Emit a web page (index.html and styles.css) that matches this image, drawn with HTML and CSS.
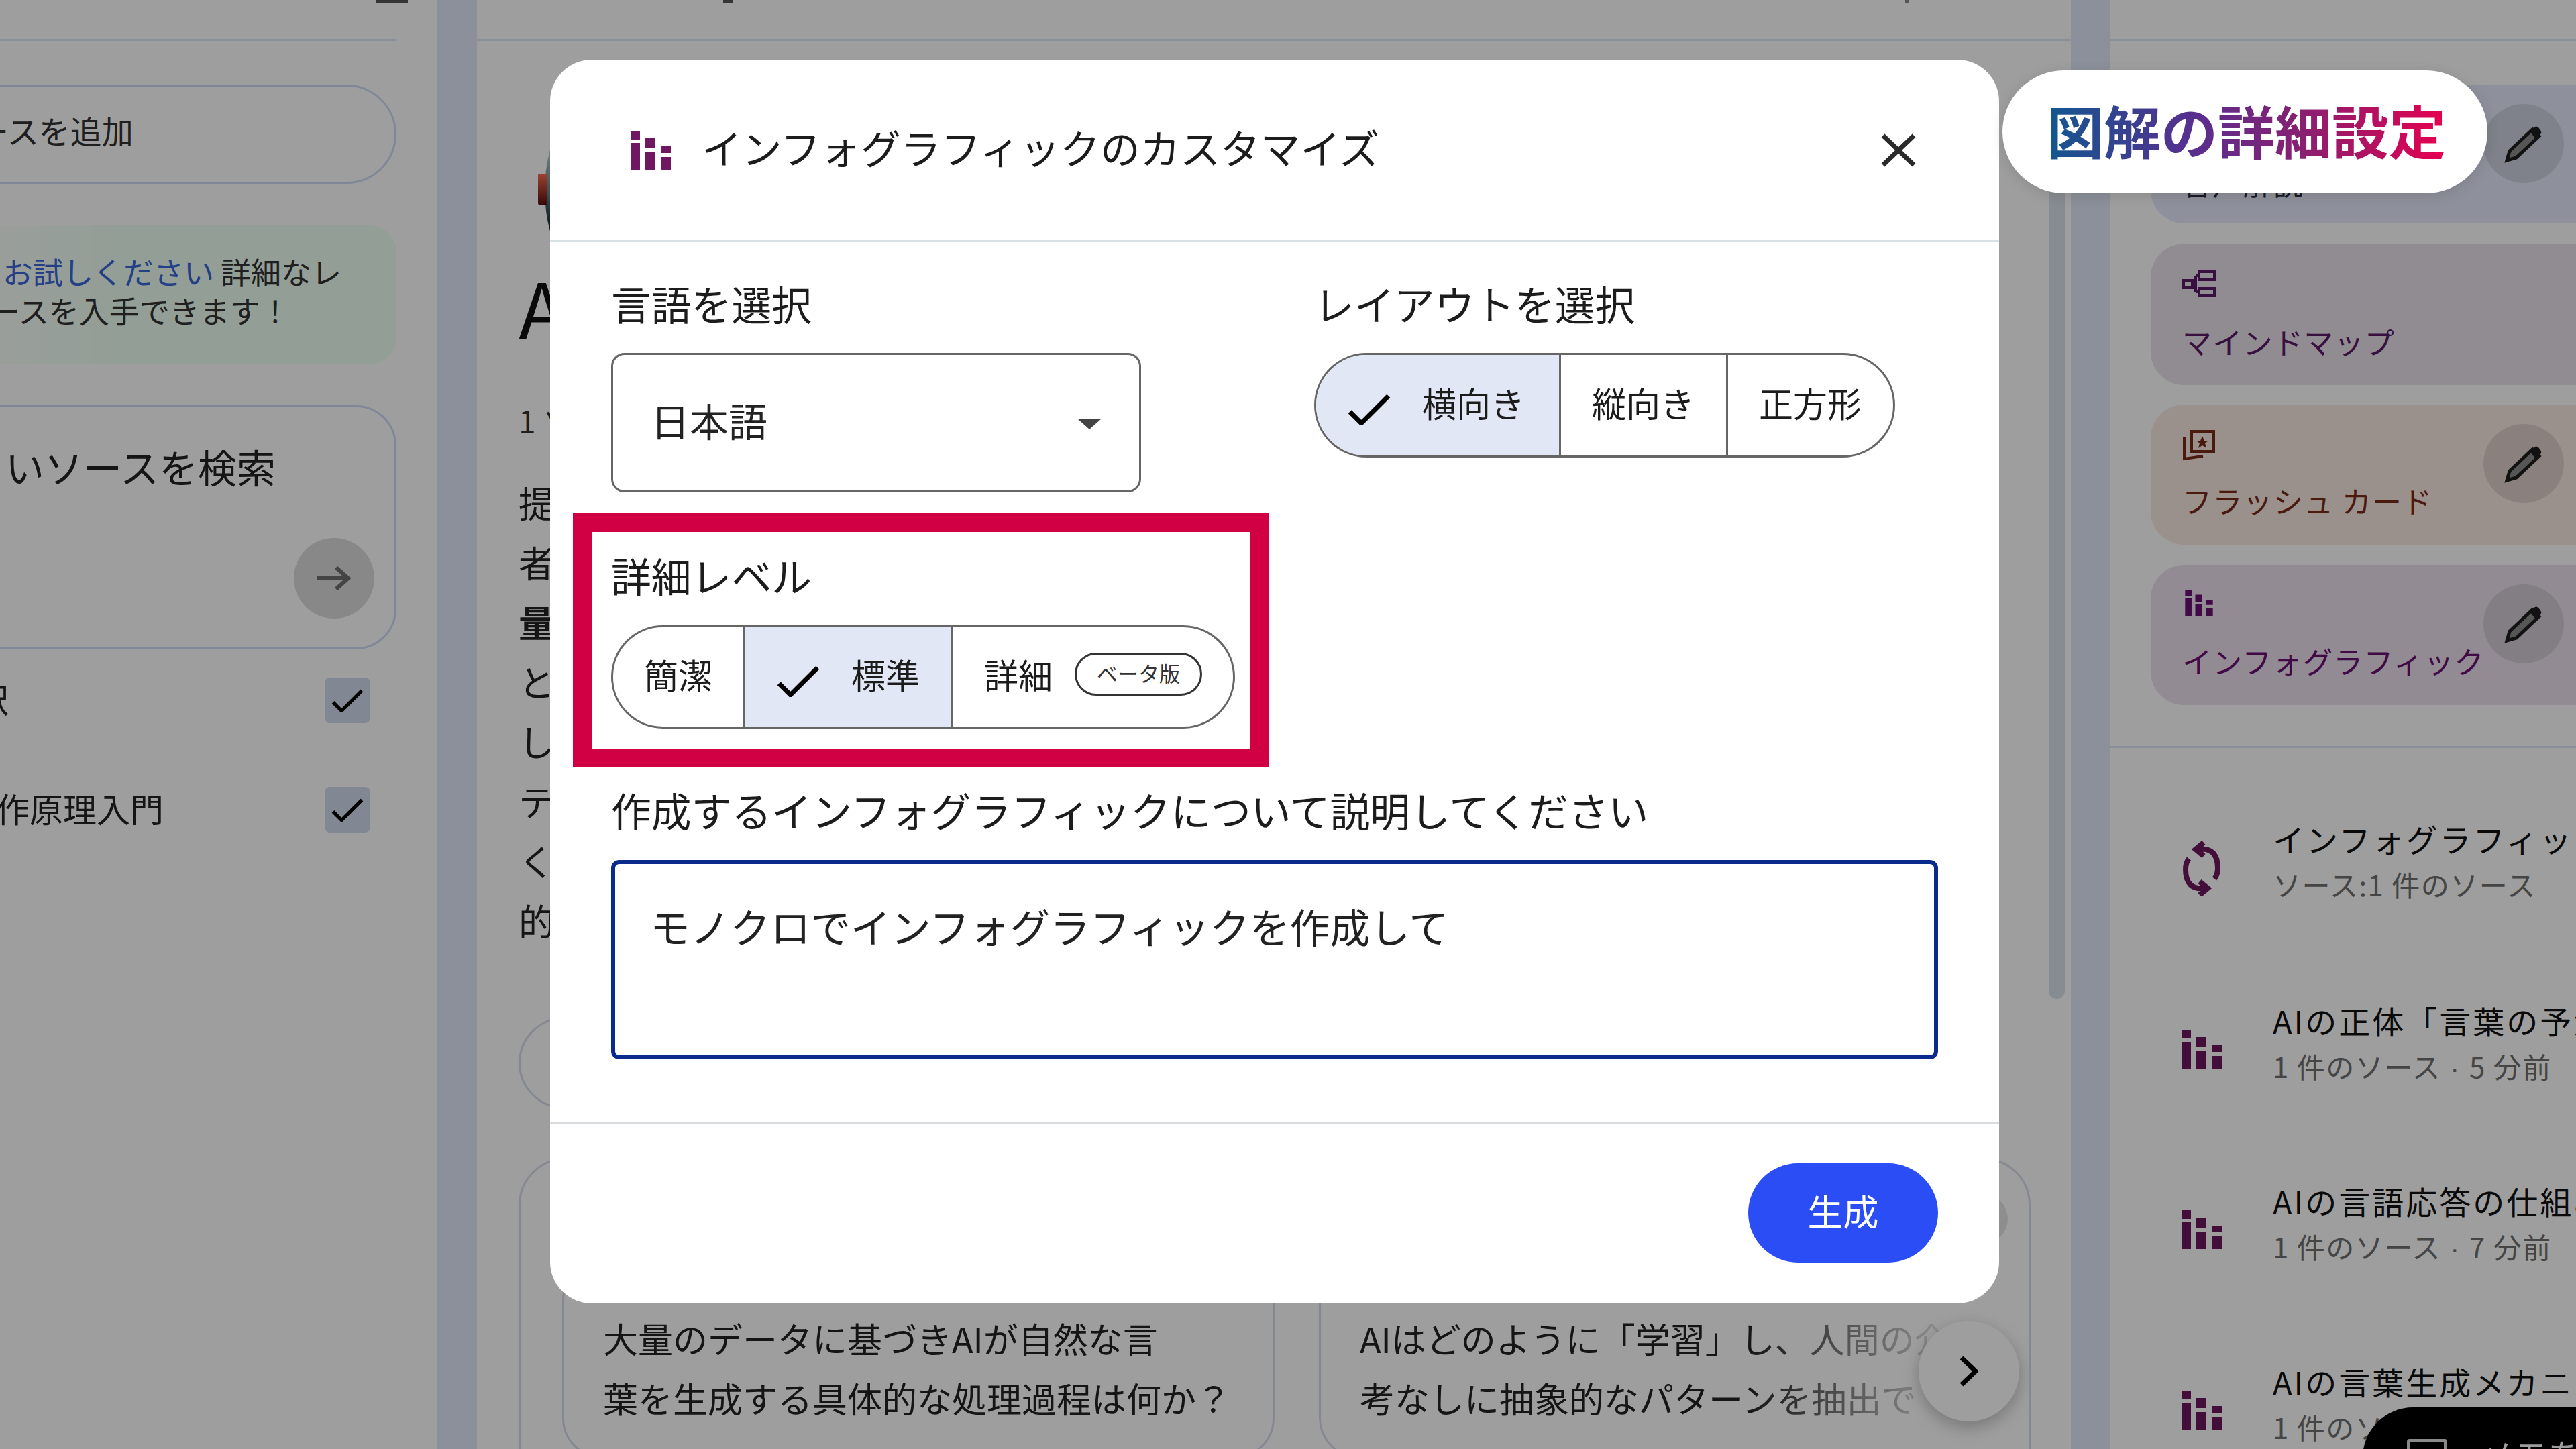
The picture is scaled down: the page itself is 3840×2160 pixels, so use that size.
FILE: index.html
```html
<!DOCTYPE html>
<html lang="ja">
<head>
<meta charset="utf-8">
<title>インフォグラフィックのカスタマイズ</title>
<link rel="stylesheet" href="styles.css">
</head>
<body>
<svg class="defs" width="0" height="0" aria-hidden="true">
  <defs>
    <linearGradient id="g-logo" x1="0" y1="0" x2="0" y2="1">
      <stop offset="0" stop-color="#b4cfc8"/>
      <stop offset=".55" stop-color="#5d7f80"/>
      <stop offset="1" stop-color="#0c1c1e"/>
    </linearGradient>
    <linearGradient id="g-red" x1="0" y1="0" x2="0" y2="1">
      <stop offset="0" stop-color="#ff6a50"/>
      <stop offset="1" stop-color="#5a1010"/>
    </linearGradient>
  </defs>
  <symbol id="i-info" viewBox="0 0 60 58">
    <path d="M0 0h14v13H0zM0 18h14v40H0zM22 11h15v15H22zM22 32h15v26H22zM45 23h15v10H45zM45 39h15v19H45z"/>
  </symbol>
  <symbol id="i-pencil" viewBox="0 0 58 58">
    <path class="pen-body" d="M4 54l4-14L42 8l10 10-34 32z"/>
    <path d="M38 11l6-6q4-3 7 0l3 4q3 4-1 7l-6 6z"/>
  </symbol>
  <symbol id="i-check" viewBox="0 0 60 44">
    <path class="check-line" d="M3 25l16 16L57 3"/>
  </symbol>
</svg>

<div class="app">
  <section class="panel left">
    <header class="bar"><span class="mark mark-left"></span></header>
    <div class="add-pill">ースを追加</div>
    <div class="promo">
      <p class="promo-a"><span class="link">お試しください</span> 詳細なレ</p>
      <p class="promo-b">ースを入手できます！</p>
    </div>
    <div class="search">
      <p class="search-text">いソースを検索</p>
      <span class="go">
        <svg viewBox="0 0 50 36" width="50" height="36"><path d="M0 18h46M28 2l18 16-18 16"/></svg>
      </span>
    </div>
    <div class="src src-a"><span class="src-name">翻訳</span><span class="box"><svg width="48" height="35"><use href="#i-check"/></svg></span></div>
    <div class="src src-b"><span class="src-name">動作原理入門</span><span class="box"><svg width="48" height="35"><use href="#i-check"/></svg></span></div>
  </section>

  <section class="panel mid">
    <header class="bar"><span class="mark mark-mid"></span><span class="mark mark-mid2"></span></header>
    <div class="doc">
      <svg class="logo" viewBox="0 0 120 122" width="120" height="122">
        <path d="M18 0Q2 61 18 122H120V0z" fill="url(#g-logo)"/>
        <rect x="0" y="36" width="14" height="46" rx="2" fill="url(#g-red)"/>
      </svg>
      <h1 class="doc-title">AI</h1>
      <p class="doc-meta">1 ソース</p>
      <div class="doc-body">
        <p>提</p><p>者</p><p class="strong">量</p><p>と</p><p>し</p><p>テ</p><p>く</p><p>的</p>
      </div>
      <div class="note-pill"></div>
      <div class="suggest">
        <article class="q"><p>大量のデータに基づきAIが自然な言</p><p>葉を生成する具体的な処理過程は何か？</p></article>
        <article class="q q-fade"><p>AIはどのように「学習」し、人間の介</p><p>考なしに抽象的なパターンを抽出で</p></article>
        <span class="peek"></span>
        <span class="next"><svg viewBox="0 0 28 46" width="28" height="46"><path d="M3 3l21 20L3 43"/></svg></span>
      </div>
    </div>
    <span class="scrollbar"></span>
  </section>

  <section class="panel right">
    <header class="bar"></header>
    <div class="tools">
      <div class="tool t-audio">
        <span class="tool-ic"></span>
        <p class="tool-label">音声解説</p>
        <span class="pen"><svg width="58" height="58"><use href="#i-pencil"/></svg></span>
      </div>
      <div class="tool t-map">
        <svg class="tool-ic" viewBox="0 0 50 40" width="50" height="40"><path d="M2 15h13v11H2zM25 2h23v12H25zM25 27h23v11H25zM15 20h5M20 8v24M20 8h5M20 32h5"/></svg>
        <p class="tool-label">マインドマップ</p>
      </div>
      <div class="tool t-card">
        <svg class="tool-ic" viewBox="0 0 50 50" width="50" height="50"><path d="M14 3h33v30H14zM3 12v32l28-4"/><path class="fill" d="M30 10l3 7h6l-5 4 2 7-6-4-6 4 2-7-5-4h6z"/></svg>
        <p class="tool-label">フラッシュ カード</p>
        <span class="pen"><svg width="58" height="58"><use href="#i-pencil"/></svg></span>
      </div>
      <div class="tool t-info">
        <svg class="tool-ic info-ic" width="42" height="40"><use href="#i-info"/></svg>
        <p class="tool-label">インフォグラフィック</p>
        <span class="pen"><svg width="58" height="58"><use href="#i-pencil"/></svg></span>
      </div>
    </div>
    <ul class="outputs">
      <li class="out">
        <svg class="out-ic sync" viewBox="0 0 60 82" width="60" height="82"><path d="M24 12q30-4 30 28 0 10-5 16M36 70Q6 74 6 42q0-10 5-16M33 2L21 12l12 10M27 60l12 10-12 10"/></svg>
        <div class="out-text out-first"><p class="out-title">インフォグラフィック</p><p class="out-sub">ソース:1 件のソース</p></div>
      </li>
      <li class="out">
        <svg class="out-ic" width="60" height="58"><use href="#i-info"/></svg>
        <div class="out-text"><p class="out-title">AIの正体「言葉の予測</p><p class="out-sub">1 件のソース<span class="dot"> · </span>5 分前</p></div>
      </li>
      <li class="out">
        <svg class="out-ic" width="60" height="58"><use href="#i-info"/></svg>
        <div class="out-text"><p class="out-title">AIの言語応答の仕組み</p><p class="out-sub">1 件のソース<span class="dot"> · </span>7 分前</p></div>
      </li>
      <li class="out">
        <svg class="out-ic" width="60" height="58"><use href="#i-info"/></svg>
        <div class="out-text"><p class="out-title">AIの言葉生成メカニズム</p><p class="out-sub">1 件のソース<span class="dot"> · </span>9 分前</p></div>
      </li>
    </ul>
    <div class="add-note">
      <span class="note-ic"></span>
      <span>メモを追加</span>
    </div>
  </section>
</div>

<div class="scrim"></div>

<div class="modal" role="dialog">
  <header class="m-head">
    <svg class="m-icon" width="60" height="58"><use href="#i-info"/></svg>
    <h2 class="m-title">インフォグラフィックのカスタマイズ</h2>
    <svg class="m-close" viewBox="0 0 52 50" width="52" height="50"><path d="M3 3l46 44M49 3L3 47"/></svg>
  </header>
  <div class="m-body">
    <div class="m-cols">
      <div class="m-col">
        <p class="m-label">言語を選択</p>
        <div class="select">
          <span class="select-text">日本語</span>
          <svg viewBox="0 0 36 16" width="36" height="16"><path d="M0 0h36L18 16z"/></svg>
        </div>
      </div>
      <div class="m-col">
        <p class="m-label">レイアウトを選択</p>
        <div class="seg seg-layout">
          <span class="opt on opt-land"><svg width="64" height="47"><use href="#i-check"/></svg>横向き</span>
          <span class="opt opt-plain">縦向き</span>
          <span class="opt opt-plain">正方形</span>
        </div>
      </div>
    </div>
    <div class="highlight">
      <p class="m-label">詳細レベル</p>
      <div class="seg seg-detail">
        <span class="opt opt-short">簡潔</span>
        <span class="opt on opt-std"><svg width="64" height="47"><use href="#i-check"/></svg>標準</span>
        <span class="opt opt-full">詳細<em class="beta">ベータ版</em></span>
      </div>
    </div>
    <p class="m-label m-label-desc">作成するインフォグラフィックについて説明してください</p>
    <div class="textarea">モノクロでインフォグラフィックを作成して</div>
  </div>
  <footer class="m-foot">
    <button class="generate" type="button">生成</button>
  </footer>
</div>

<div class="callout"><span>図解の詳細設定</span></div>
</body>
</html>
```

FILE: styles.css
```css
* { box-sizing: border-box; }
html, body { margin: 0; padding: 0; width: 3840px; height: 2160px; overflow: hidden; }
body {
  position: relative;
  font-family: "Noto Sans CJK JP", "Noto Sans", "Liberation Sans", sans-serif;
  color: #000;
  background: #e3e9f8;
}
p, h1, h2, ul { margin: 0; padding: 0; font-weight: 400; }
ul { list-style: none; }
.defs { position: absolute; }

/* page behind the dialog */
.app { display: flex; gap: 59px; width: 3840px; height: 2160px; overflow: hidden; }
.panel { position: relative; background: #fff; height: 2160px; overflow: hidden; flex: none; }
.left { width: 652px; padding-right: 61px; }
.mid { width: 2376px; }
.right { width: 694px; }
.bar { height: 61px; border-bottom: 3px solid #dfe9f8; position: relative; }
.mark { position: absolute; top: 0; height: 5px; background: #555; }
.mark-left { left: 560px; width: 48px; }
.mark-mid { left: 367px; width: 14px; }
.mark-mid2 { left: 2129px; width: 5px; height: 4px; background: #888; }

.add-pill {
  margin: 65px 0 0 -100px;
  height: 148px;
  padding-left: 63px;
  border: 3px solid #cfdcf5;
  border-radius: 74px;
  font-size: 47px;
  line-height: 130px;
  color: #333;
}
.promo {
  margin: 62px 0 0 -100px;
  height: 207px;
  padding: 40px 0 0 100px;
  border-radius: 40px;
  background: linear-gradient(to right, #fff, #edfff2 40%);
  font-size: 45px;
  line-height: 58px;
  color: #333;
}
.promo-a { margin-left: 4px; }
.promo-b { margin-left: -15px; }
.link { color: #3a66d8; }
.search {
  margin: 61px 0 0 -100px;
  height: 364px;
  border: 3px solid #cfdcf5;
  border-radius: 60px;
  padding: 48px 30px 43px 105px;
  display: flex;
  flex-direction: column;
  justify-content: space-between;
  font-size: 58px;
  line-height: 80px;
  color: #222;
}
.go {
  align-self: flex-end;
  width: 120px;
  height: 120px;
  border-radius: 50%;
  background: #dcdcdc;
  display: flex;
  align-items: center;
  justify-content: center;
}
.go path { fill: none; stroke: #6e6e6e; stroke-width: 6; }
.src {
  display: flex;
  align-items: center;
  justify-content: space-between;
  height: 68px;
  padding-right: 39px;
  font-size: 50px;
  color: #222;
}
.src-name { padding-bottom: 6px; }
.src-a { margin: 42px 0 0 -87px; }
.src-b { margin: 95px 0 0 -56px; }
.box {
  width: 68px;
  height: 68px;
  border-radius: 8px;
  background: #d0dcee;
  display: flex;
  align-items: center;
  justify-content: center;
}
.check-line { fill: none; stroke: #000; stroke-width: 6.5; }
.box .check-line { stroke-width: 10; }

.doc { padding-left: 62px; }
.logo { display: block; margin: 162px 0 0 29px; }
.doc-title { margin-top: 51px; font-size: 115px; line-height: 120px; color: #111; }
.doc-meta { margin-top: 80px; font-size: 46px; line-height: 60px; color: #333; }
.doc-body { margin-top: 48px; font-size: 54px; line-height: 89px; color: #222; }
.strong { font-weight: 700; }
.note-pill {
  margin-top: 100px;
  width: 1500px;
  height: 137px;
  border: 3px solid #d6dce8;
  border-radius: 69px;
}
.suggest {
  position: relative;
  margin-top: 73px;
  width: 2254px;
  height: 600px;
  padding: 150px 0 0 62px;
  border: 3px solid #d6dce8;
  border-radius: 70px;
  display: flex;
  gap: 66px;
  overflow: hidden;
}
.q {
  width: 1062px;
  height: 295px;
  flex: none;
  padding: 68px 0 0 58px;
  border: 3px solid #d6dce8;
  border-radius: 60px;
  font-size: 52px;
  line-height: 89px;
  white-space: nowrap;
  color: #222;
}
.q-fade {
  width: 1070px;
  border-right-color: transparent;
  -webkit-mask-image: linear-gradient(to right, #000 640px, transparent 960px);
  mask-image: linear-gradient(to right, #000 640px, transparent 960px);
}
.peek {
  position: absolute;
  top: 50px;
  right: 31px;
  width: 76px;
  height: 76px;
  border-radius: 50%;
  background: #e6e6e6;
}
.next {
  position: absolute;
  top: 240px;
  right: 14px;
  width: 150px;
  height: 150px;
  border-radius: 50%;
  background: #fff;
  box-shadow: 0 8px 24px rgba(0, 0, 0, .25);
  display: flex;
  align-items: center;
  justify-content: center;
}
.next path { fill: none; stroke: #000; stroke-width: 7; }
.scrollbar {
  position: absolute;
  top: 200px;
  left: 2343px;
  width: 24px;
  height: 1289px;
  border-radius: 0 0 12px 12px;
  background: #d8e3ea;
}

.tools { padding-left: 60px; display: flex; flex-direction: column; margin-top: 65px; }
.tool { position: relative; padding: 40px 0 0 47px; border-radius: 50px 0 0 50px; }
.t-audio { height: 207px; background: #e6eafa; }
.t-map { height: 211px; margin-top: 30px; background: #ebe3ea; color: #5a1a68; }
.t-card { height: 209px; margin-top: 29px; background: #f9e9e2; color: #7a2a18; padding-top: 37px; }
.t-info { height: 209px; margin-top: 30px; background: #ece1ee; color: #6a0f70; padding-top: 37px; }
.tool-ic { display: block; height: 40px; width: 50px; }
.t-audio .tool-ic { height: 76px; }
.t-card .tool-ic { height: 50px; margin-bottom: -10px; }
.tool svg.tool-ic path { fill: none; stroke: currentColor; stroke-width: 4; }
.tool svg.tool-ic path.fill { fill: currentColor; stroke: none; }
.tool svg.info-ic { fill: currentColor; width: 42px; margin-left: 4px; }
.tool-label { margin-top: 36px; font-size: 44px; letter-spacing: 1.3px; line-height: 60px; }
.t-audio .tool-label { margin-top: 0; color: #2a2a3a; }
.pen {
  position: absolute;
  top: 29px;
  right: 18px;
  width: 120px;
  height: 118px;
  border-radius: 50%;
  background: rgba(0, 0, 0, .1);
  display: flex;
  align-items: center;
  justify-content: center;
  fill: #1d1d1d;
}
.pen-body { fill: #8c8c8c; stroke: #1d1d1d; stroke-width: 5; }
.outputs { margin-top: 61px; border-top: 3px solid #dfe9f8; padding: 38px 0 0 106px; }
.out { display: flex; align-items: center; gap: 76px; height: 269px; white-space: nowrap; }
.out-ic { flex: none; margin-top: 14px; fill: #6f1760; }
.out-first { padding-bottom: 8px; }
.sync { margin-top: 14px; }
.sync path { fill: none; stroke: #6f1760; stroke-width: 8; }
.out-title { font-size: 47px; letter-spacing: 3px; line-height: 68px; color: #111; }
.out-sub { font-size: 42px; letter-spacing: 1.5px; line-height: 68px; color: #707070; }
.dot { font-family: "Liberation Sans", sans-serif; }
.add-note {
  position: absolute;
  top: 2098px;
  left: 376px;
  width: 500px;
  height: 150px;
  border-radius: 75px;
  background: #000;
  color: #fff;
  display: flex;
  align-items: flex-start;
  gap: 50px;
  padding: 39px 0 0 66px;
  font-size: 50px;
  line-height: 60px;
}
.note-ic { margin-top: 8px; width: 60px; height: 60px; border: 5px solid #ddd; border-radius: 4px; }

.scrim { position: absolute; inset: 0; background: rgba(0, 0, 0, .38); }

/* dialog */
.modal {
  position: absolute;
  left: 820px;
  top: 89px;
  width: 2160px;
  height: 1854px;
  display: flex;
  flex-direction: column;
  background: #fff;
  border-radius: 62px;
  overflow: hidden;
}
.m-head {
  height: 272px;
  flex: none;
  display: flex;
  align-items: center;
  padding: 0 124px 0 120px;
  border-bottom: 3px solid #d8e2e4;
}
.m-icon { fill: #6f1760; flex: none; }
.m-title { flex: 1; margin-left: 46px; padding-bottom: 10px; font-size: 59.7px; line-height: 80px; color: #1c1c1c; }
.m-close { flex: none; }
.m-close path { fill: none; stroke: #2a2a2a; stroke-width: 7; }
.m-body { flex: 1; padding: 54px 91px 0; }
.m-cols { display: grid; grid-template-columns: 790px auto; column-gap: 258px; }
.m-label { height: 80px; padding-bottom: 6px; font-size: 59.8px; line-height: 74px; color: #1c1c1c; }
.select {
  margin-top: 31px;
  height: 208px;
  display: flex;
  align-items: center;
  justify-content: space-between;
  padding: 0 56px 0 56px;
  border: 3px solid #666;
  border-radius: 20px;
  font-size: 58px;
  color: #222;
}
.select-text { padding-bottom: 8px; }
.select svg { fill: #444; margin-top: 4px; }
.seg {
  margin-top: 31px;
  height: 156px;
  display: inline-flex;
  border: 3px solid #666;
  border-radius: 78px;
  overflow: hidden;
  background: #fff;
}
.opt {
  display: flex;
  align-items: center;
  height: 100%;
  padding-bottom: 8px;
  font-size: 51px;
  color: #1c1c1c;
  border-left: 3px solid #666;
  white-space: nowrap;
}
.opt:first-child { border-left: 0; }
.opt.on { background: #e2e7f5; }
.opt svg { flex: none; margin-top: 20px; }
.opt-land { padding-left: 47px; padding-right: 51px; gap: 47px; }
.opt-plain { padding-left: 46px; padding-right: 47px; }
.highlight {
  margin: 31px 0 0 -57px;
  width: 1038px;
  height: 379px;
  padding: 27px 0 0 29px;
  border: 28px solid #d10044;
}
.seg-detail { margin-top: 32px; height: 154px; border-radius: 77px; }
.opt-short { padding-left: 46px; padding-right: 46px; }
.opt-std { padding-left: 47px; padding-right: 47px; gap: 47px; }
.opt-full { padding-left: 46px; padding-right: 46px; gap: 33px; }
.beta {
  font-style: normal;
  height: 64px;
  padding: 0 30px;
  border: 3px solid #333;
  border-radius: 32px;
  font-size: 31px;
  line-height: 54px;
  color: #333;
}
.m-label-desc { margin-top: 26px; }
.textarea {
  margin-top: 32px;
  height: 297px;
  padding: 50px 52px 0;
  border: 6px solid #0b2a8e;
  border-radius: 12px;
  font-size: 59.8px;
  line-height: 84px;
  color: #222;
}
.m-foot {
  height: 271px;
  flex: none;
  border-top: 3px solid #d8dcdf;
  padding: 59px 91px 0 0;
  display: flex;
  justify-content: flex-end;
  align-items: flex-start;
}
.generate {
  width: 283px;
  height: 148px;
  padding: 0 0 8px;
  border: 0;
  border-radius: 74px;
  background: #2b4df5;
  color: #fff;
  font-family: inherit;
  font-size: 53px;
}

/* annotation */
.callout {
  position: absolute;
  left: 2985px;
  top: 105px;
  width: 723px;
  height: 183px;
  padding: 0 0 8px 66px;
  display: flex;
  align-items: center;
  background: #fff;
  border-radius: 92px;
  box-shadow: 0 4px 20px rgba(0, 0, 0, .12);
  font-size: 85px;
  font-weight: 700;
  white-space: nowrap;
}
.callout span {
  background: linear-gradient(to right, #12578f, #553090 35%, #8a1f70 65%, #e6004f);
  -webkit-background-clip: text;
  background-clip: text;
  color: transparent;
}
```
